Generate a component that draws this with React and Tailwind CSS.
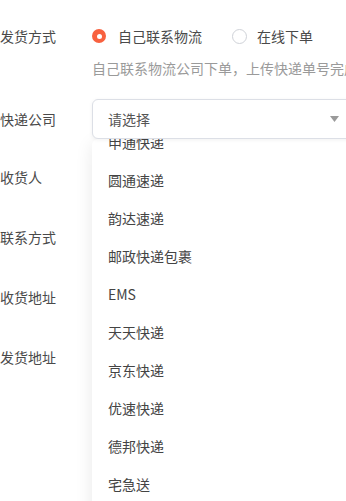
const companies = [
  '申通快递',
  '圆通速递',
  '韵达速递',
  '邮政快递包裹',
  'EMS',
  '天天快递',
  '京东快递',
  '优速快递',
  '德邦快递',
  '宅急送',
  '百世快递',
];

function Row({ label, children, className = '' }) {
  return (
    <div className={`flex ${className}`}>
      <div className="w-[92px] shrink-0 text-[14px] leading-[20px] text-[#4a4a4a]">{label}</div>
      <div className="flex-1">{children}</div>
    </div>
  );
}

function App() {
  return (
    <div
      className="relative h-[501px] w-[346px] overflow-hidden bg-white"
      style={{ fontFamily: '"Noto Sans CJK SC", "Noto Sans", sans-serif' }}
    >
      <div className="w-[420px] pt-[26px]">
        <Row label="发货方式" className="items-start">
          <div className="flex items-center h-[20px] text-[14px] text-[#4a4a4a]">
            <span className="flex h-[14px] w-[14px] items-center justify-center rounded-full bg-[#f8613f]">
              <span className="h-[5px] w-[5px] rounded-full bg-white" />
            </span>
            <span className="ml-[12px]">自己联系物流</span>
            <span className="ml-[30px] h-[15px] w-[15px] rounded-full border border-[#cfd2d8] bg-white" />
            <span className="ml-[10px]">在线下单</span>
          </div>
          <p className="mt-[12px] whitespace-nowrap text-[14px] leading-[20px] text-[#9a9a9a]">
            自己联系物流公司下单，上传快递单号完成发货
          </p>
        </Row>

        <Row label="快递公司" className="mt-[21px] items-center">
          <div className="relative w-[263px]">
            <div className="relative z-10 flex h-10 items-center rounded-[6px] border border-[#dcdfe6] bg-white pl-[15px] text-[14px] text-[#555] shadow-[0_1px_4px_rgba(0,0,0,0.06)]">
              请选择
              <svg className="absolute right-[15px] top-[16px]" width="9" height="6" viewBox="0 0 9 6">
                <path d="M0 0h9L4.5 6z" fill="#9a9a9a" />
              </svg>
            </div>
            <div className="absolute left-0 top-[40px] h-[400px] w-full overflow-hidden rounded-t-[6px] bg-white shadow-[0_4px_18px_rgba(0,0,0,0.09)]">
              <ul className="-mt-[16px]">
                {companies.map((c) => (
                  <li key={c} className="flex h-[38px] items-center pl-[16px] text-[14px] text-[#444]">
                    {c}
                  </li>
                ))}
              </ul>
            </div>
          </div>
        </Row>

        <Row label="收货人" className="mt-[28px]" />
        <Row label="联系方式" className="mt-[40px]" />
        <Row label="收货地址" className="mt-[40px]" />
        <Row label="发货地址" className="mt-[40px]" />
      </div>
    </div>
  );
}

export default App;
